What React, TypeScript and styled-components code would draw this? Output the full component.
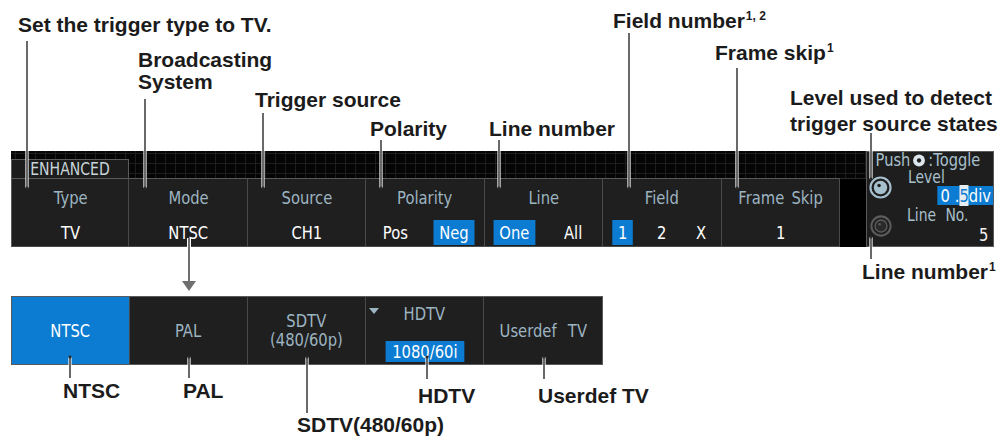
import React from "react";
import styled, { createGlobalStyle } from "styled-components";

const ui = `"DejaVu Sans", "Noto Sans", sans-serif`;
const callFont = `"Liberation Sans", Arial, sans-serif`;

const GlobalStyle = createGlobalStyle`
  html, body {
    margin: 0;
    padding: 0;
    background: #ffffff;
  }
  body {
    width: 1007px;
    height: 441px;
    overflow: hidden;
  }
  * {
    box-sizing: border-box;
  }
`;

const Page = styled.div`
  position: relative;
  width: 1007px;
  height: 441px;
  padding: 151px 0 0 11px;
  display: flex;
  flex-direction: column;
  gap: 49px;
  background: #ffffff;
`;

// the instrument font is a narrow one; DejaVu squeezed sideways stands in for it
const Narrow = styled.span<{ $o?: string; $sx?: number }>`
  display: inline-block;
  white-space: nowrap;
  transform: scaleX(${(p) => p.$sx ?? 0.82});
  transform-origin: ${(p) => p.$o ?? "center"};
`;

const Screen = styled.div`
  display: flex;
  height: 96px;
`;

const MenuArea = styled.div`
  width: 855px;
  display: flex;
  flex-direction: column;
  background: #000;
`;

const GridBand = styled.div`
  height: 27px;
  display: flex;
  align-items: flex-end;
  background-color: #050505;
  background-image: linear-gradient(#1d1d1d 1px, transparent 1px),
    linear-gradient(90deg, #1d1d1d 1px, transparent 1px);
  background-size: 10px 10px;
  background-position: 4px 2px;
`;

const Tab = styled.div`
  width: 118px;
  height: 19px;
  border: 1px solid #5a5a5a;
  border-bottom: none;
  background: #1c1c1c;
  color: #c9d4db;
  font-family: ${ui};
  font-size: 18px;
  line-height: 18px;
  text-align: center;
`;

const MenuRow = styled.div`
  flex: 1;
  display: grid;
  grid-template-columns: repeat(7, 1fr) 26px;
`;

const Cell = styled.div`
  display: flex;
  flex-direction: column;
  background: #1f1f1f;
  border-top: 1px solid #5a5a5a;
  border-bottom: 1px solid #4a4a4a;
  border-right: 1px solid #4a4a4a;
  font-family: ${ui};
  &:first-child {
    border-left: 1px solid #5a5a5a;
  }
`;

const Filler = styled.div`
  background: #000;
  border-top: 1px solid #2a2a2a;
`;

const Head = styled.div`
  height: 36px;
  display: flex;
  align-items: center;
  justify-content: center;
  color: #9db4c1;
  font-size: 18px;
  word-spacing: 3px;
`;

const Values = styled.div<{ $cols: number }>`
  flex: 1;
  padding-top: 5px;
  display: grid;
  grid-template-columns: repeat(${(p) => p.$cols}, 1fr);
  align-items: start;
  justify-items: center;
  color: #f2f2f2;
  font-size: 18px;
`;

const Opt = styled.span<{ $on?: boolean }>`
  height: 25px;
  line-height: 25px;
  padding: 0 7px;
  background: ${(p) => (p.$on ? "#0b7cd2" : "transparent")};
  color: #ffffff;
  transform: scaleX(0.82);
`;

const SidePanel = styled.div`
  width: 128px;
  border: 1px solid #5a5a5a;
  background: #1e1e1e;
  display: grid;
  grid-template-columns: 27px 1fr;
  grid-template-rows: 17px 16px 21px 18px 1fr;
  font-family: ${ui};
  color: #a9c0cd;
`;

const PushRow = styled.div`
  grid-column: 1 / 3;
  padding-left: 10px;
  display: flex;
  align-items: center;
  gap: 3px;
  font-size: 17px;
  line-height: 17px;
  white-space: nowrap;
  transform: scaleX(0.86);
  transform-origin: left;
`;

const PushIcon = styled.svg`
  flex: none;
`;

const KnobSlot = styled.div<{ $row: string }>`
  grid-column: 1;
  grid-row: ${(p) => p.$row};
  display: flex;
  align-items: center;
  justify-content: center;
`;

const SideLabel = styled.div<{ $row: number; $indent: number; $lh: number }>`
  grid-column: 2;
  grid-row: ${(p) => p.$row};
  padding-left: ${(p) => p.$indent}px;
  font-size: 17px;
  line-height: ${(p) => p.$lh}px;
  word-spacing: 6px;
`;

const LevelValue = styled.div`
  grid-column: 2;
  grid-row: 3;
  justify-self: end;
  align-self: center;
  height: 19px;
  line-height: 19px;
  padding: 0 3px 0 4px;
  background: #0b7cd2;
  color: #ffffff;
  font-size: 18px;
  white-space: pre;
  transform: scaleX(0.82);
  transform-origin: right;
`;

const Cursor = styled.span`
  background: #e6edf2;
  color: #0b7cd2;
`;

const LineValue = styled.div`
  grid-column: 2;
  grid-row: 5;
  justify-self: end;
  align-self: center;
  padding-right: 5px;
  color: #f2f2f2;
  font-size: 18px;
  line-height: 20px;
`;

const ModeMenu = styled.div`
  width: 592px;
  height: 69px;
  display: grid;
  grid-template-columns: repeat(5, 1fr);
  border: 1px solid #5a5a5a;
  background: #1f1f1f;
  font-family: ${ui};
`;

const ModeCell = styled.div<{ $on?: boolean }>`
  position: relative;
  display: flex;
  flex-direction: column;
  align-items: center;
  justify-content: center;
  border-right: 1px solid #4a4a4a;
  background: ${(p) => (p.$on ? "#0b7cd2" : "#1f1f1f")};
  color: ${(p) => (p.$on ? "#ffffff" : "#9db4c1")};
  font-size: 18px;
  line-height: 18px;
  word-spacing: 8px;
  &:last-child {
    border-right: none;
  }
`;

const TwoLine = styled(ModeCell)`
  gap: 1px;
`;

const HdCell = styled(ModeCell)`
  justify-content: space-between;
  padding: 8px 0 2px;
`;

const DropMark = styled.span`
  position: absolute;
  left: 3px;
  top: 11px;
  width: 0;
  height: 0;
  border-left: 5px solid transparent;
  border-right: 5px solid transparent;
  border-top: 6px solid #9db4c1;
`;

const HdValue = styled.span`
  height: 21px;
  line-height: 21px;
  padding: 0 8px;
  background: #0b7cd2;
  color: #ffffff;
  transform: scaleX(0.82);
`;

const Overlay = styled.svg`
  position: absolute;
  left: 0;
  top: 0;
  pointer-events: none;
`;

const Callout = styled.div<{ $x: number; $y: number; $lh?: number }>`
  position: absolute;
  left: ${(p) => p.$x}px;
  top: ${(p) => p.$y}px;
  font-family: ${callFont};
  font-weight: bold;
  font-size: 21px;
  line-height: ${(p) => p.$lh ?? 22}px;
  color: #1b1b1b;
  white-space: nowrap;
`;

const Sup = styled.sup`
  font-size: 12px;
  line-height: 0;
  vertical-align: 8px;
  margin-left: 1px;
`;

const Knob = ({ size, dim }: { size: number; dim?: boolean }) => {
  const c = dim ? "#5b5b5b" : "#a6bfcd";
  return (
    <svg width={size} height={size} viewBox="0 0 24 24">
      <circle cx="12" cy="12" r="10.5" fill="none" stroke={c} strokeWidth="2.2" />
      {dim ? (
        <>
          <circle cx="12" cy="12" r="6.5" fill="#2a2a2a" stroke={c} strokeWidth="1.5" />
          <circle cx="10.5" cy="10" r="1.4" fill={c} />
        </>
      ) : (
        <>
          <circle cx="12" cy="12" r="7" fill={c} />
          <circle cx="10.5" cy="10" r="1.8" fill="#1e1e1e" />
        </>
      )}
    </svg>
  );
};

// drawn wide because the whole row is squeezed
const PushKnob = () => (
  <PushIcon width="15" height="13" viewBox="0 0 12 12" preserveAspectRatio="none">
    <circle cx="6" cy="6" r="5.5" fill="#dce6ec" />
    <circle cx="6" cy="6" r="2" fill="#1e1e1e" />
  </PushIcon>
);

type Leader = { x: number; y1: number; y2: number; dot: "top" | "bottom" };

const leaders: Leader[] = [
  { x: 27, y1: 41, y2: 188, dot: "bottom" },
  { x: 145, y1: 99, y2: 188, dot: "bottom" },
  { x: 263, y1: 113, y2: 188, dot: "bottom" },
  { x: 381, y1: 140, y2: 188, dot: "bottom" },
  { x: 499, y1: 140, y2: 188, dot: "bottom" },
  { x: 629, y1: 33, y2: 188, dot: "bottom" },
  { x: 737, y1: 68, y2: 188, dot: "bottom" },
  { x: 871, y1: 133, y2: 179, dot: "bottom" },
  { x: 871, y1: 237, y2: 259, dot: "top" },
  { x: 70, y1: 357, y2: 378, dot: "top" },
  { x: 189, y1: 357, y2: 378, dot: "top" },
  { x: 307, y1: 357, y2: 413, dot: "top" },
  { x: 427, y1: 357, y2: 379, dot: "top" },
  { x: 544, y1: 357, y2: 379, dot: "top" },
];

const Annotations = () => (
  <Overlay width={1007} height={441}>
    {leaders.map((l, i) => (
      <g key={i}>
        <line x1={l.x} y1={l.y1} x2={l.x} y2={l.y2} stroke="#ffffff" strokeWidth="3.2" />
        <line x1={l.x} y1={l.y1} x2={l.x} y2={l.y2} stroke="#2a2a2a" strokeWidth="1.4" />
        <circle cx={l.x} cy={l.dot === "top" ? l.y1 : l.y2} r="1.6" fill="#2a2a2a" />
      </g>
    ))}
    <line x1="189" y1="238" x2="189" y2="282" stroke="#ffffff" strokeWidth="4" />
    <line x1="189" y1="238" x2="189" y2="282" stroke="#6f6f6f" strokeWidth="2" />
    <polygon points="182,281 196,281 189,291" fill="#6f6f6f" />
  </Overlay>
);

const menu = [
  { head: "Type", opts: [{ t: "TV" }] },
  { head: "Mode", opts: [{ t: "NTSC" }] },
  { head: "Source", opts: [{ t: "CH1" }] },
  { head: "Polarity", opts: [{ t: "Pos" }, { t: "Neg", on: true }] },
  { head: "Line", opts: [{ t: "One", on: true }, { t: "All" }] },
  { head: "Field", opts: [{ t: "1", on: true }, { t: "2" }, { t: "X" }] },
  { head: "Frame Skip", opts: [{ t: "1" }] },
];

export default function App() {
  return (
    <Page>
      <GlobalStyle />
      <Screen>
        <MenuArea>
          <GridBand>
            <Tab>
              <Narrow $sx={0.78}>ENHANCED</Narrow>
            </Tab>
          </GridBand>
          <MenuRow>
            {menu.map((m) => (
              <Cell key={m.head}>
                <Head>
                  <Narrow>{m.head}</Narrow>
                </Head>
                <Values $cols={m.opts.length}>
                  {m.opts.map((o) => (
                    <Opt key={o.t} $on={o.on}>
                      {o.t}
                    </Opt>
                  ))}
                </Values>
              </Cell>
            ))}
            <Filler />
          </MenuRow>
        </MenuArea>
        <SidePanel>
          <PushRow>
            Push <PushKnob />:Toggle
          </PushRow>
          <SideLabel $row={2} $indent={14} $lh={16}>
            <Narrow $o="left">Level</Narrow>
          </SideLabel>
          <KnobSlot $row="2 / 4">
            <Knob size={23} />
          </KnobSlot>
          <LevelValue>
            {"0 ."}
            <Cursor>5</Cursor>div
          </LevelValue>
          <SideLabel $row={4} $indent={13} $lh={18}>
            <Narrow $o="left">Line No.</Narrow>
          </SideLabel>
          <KnobSlot $row="4 / 6">
            <Knob size={22} dim />
          </KnobSlot>
          <LineValue>
            <Narrow $o="right">5</Narrow>
          </LineValue>
        </SidePanel>
      </Screen>

      <ModeMenu>
        <ModeCell $on>
          <Narrow>NTSC</Narrow>
        </ModeCell>
        <ModeCell>
          <Narrow>PAL</Narrow>
        </ModeCell>
        <TwoLine>
          <Narrow>SDTV</Narrow>
          <Narrow>(480/60p)</Narrow>
        </TwoLine>
        <HdCell>
          <DropMark />
          <Narrow>HDTV</Narrow>
          <HdValue>1080/60i</HdValue>
        </HdCell>
        <ModeCell>
          <Narrow>Userdef TV</Narrow>
        </ModeCell>
      </ModeMenu>

      <Annotations />

      <Callout $x={18} $y={14}>Set the trigger type to TV.</Callout>
      <Callout $x={138} $y={49}>
        Broadcasting
        <br />
        System
      </Callout>
      <Callout $x={255} $y={89}>Trigger source</Callout>
      <Callout $x={370} $y={118}>Polarity</Callout>
      <Callout $x={489} $y={118}>Line number</Callout>
      <Callout $x={613} $y={10}>
        Field number<Sup>1, 2</Sup>
      </Callout>
      <Callout $x={715} $y={42}>
        Frame skip<Sup>1</Sup>
      </Callout>
      <Callout $x={790} $y={85} $lh={26}>
        Level used to detect
        <br />
        trigger source states
      </Callout>
      <Callout $x={862} $y={261}>
        Line number<Sup>1</Sup>
      </Callout>
      <Callout $x={63} $y={380}>NTSC</Callout>
      <Callout $x={183} $y={380}>PAL</Callout>
      <Callout $x={297} $y={414}>SDTV(480/60p)</Callout>
      <Callout $x={418} $y={385}>HDTV</Callout>
      <Callout $x={538} $y={385}>Userdef TV</Callout>
    </Page>
  );
}
